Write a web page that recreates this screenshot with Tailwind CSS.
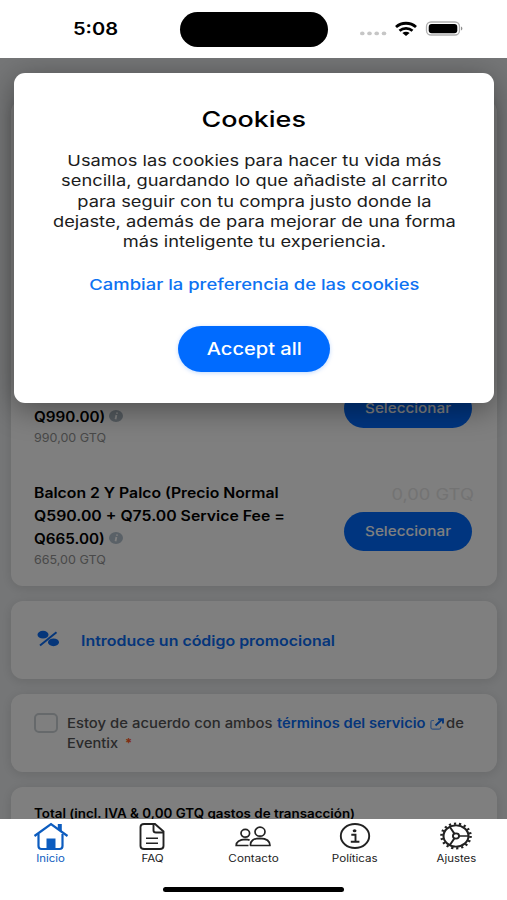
<!DOCTYPE html>
<html lang="es">
<head>
    <meta charset="UTF-8">
    <meta name="viewport" content="width=device-width, initial-scale=1.0">
    <title>Eventix</title>
    <script src="https://cdn.jsdelivr.net/npm/@tailwindcss/browser@4"></script>
</head>
<body class="bg-white font-['Inter','Liberation_Sans',sans-serif] text-black">
    <div class="flex flex-col w-[507px] h-[900px] overflow-hidden whitespace-nowrap">

        <!-- Status bar -->
        <header class="flex items-center h-[58px] shrink-0">
            <div class="w-[180px] pt-[2px] pl-[73px] text-[17px] font-semibold"><span class="inline-block origin-left scale-x-[1.18]">5:08</span></div>
            <div class="w-[148px] h-[35px] rounded-full bg-black"></div>
            <svg class="ml-[30px] w-[106px] h-[18px]" viewBox="358 20 106 18" fill="none">
                <g fill="#c6c6c6">
                    <ellipse cx="362.3" cy="33.4" rx="2.3" ry="1.9"/>
                    <ellipse cx="369.5" cy="33.4" rx="2.3" ry="1.9"/>
                    <ellipse cx="376.7" cy="33.4" rx="2.3" ry="1.9"/>
                    <ellipse cx="384" cy="33.4" rx="2.3" ry="1.9"/>
                </g>
                <g stroke="#000" stroke-width="2.8">
                    <path d="M396 27c5.600-5 14.400-5 20 0"/>
                    <path d="M399.500 30.700c3.700-3.100 9.300-3.100 13 0"/>
                </g>
                <path d="M402.400 33c2-1.700 5.200-1.700 7.200 0L406 35.900z" fill="#000"/>
                <rect x="426.500" y="22" width="33" height="13" rx="4.500" stroke="#b0b0b0" stroke-width="1.300"/>
                <rect x="428.700" y="24" width="28.600" height="9.200" rx="3" fill="#000"/>
                <path d="M461 26.600c1.900.6 1.900 3.400 0 4z" fill="#909090"/>
            </svg>
        </header>

        <main class="relative flex-1 overflow-hidden bg-[#ebedef]">
            <div class="flex flex-col gap-[15px] pl-[11px] pr-[10px] pt-[42px]">

                <!-- Tickets -->
                <section class="flex flex-col justify-end gap-[33px] h-[486px] pl-[23px] pr-[25px] pb-[16px] rounded-[12px] bg-white shadow-[0_2px_12px_rgba(0,0,0,0.12)]">
                    <div class="flex justify-between h-[89px]">
                        <div class="flex flex-col justify-end">
                            <div class="flex items-center gap-[3px] h-[23px]">
                                <span class="w-[72px] text-[14px] font-semibold"><span class="inline-block origin-left scale-x-[1.09]">Q990.00)</span></span>
                                <svg class="w-[14px] h-[12px] -mt-[1px]" viewBox="0 0 14 12">
                                    <ellipse cx="7" cy="6" rx="7" ry="6" fill="#a8b4be"/>
                                    <path d="M8 2.400v1.400M7.400 5L6.500 9.300" stroke="#fff" stroke-width="1.800"/>
                                </svg>
                            </div>
                            <div class="h-[20px] leading-[20px] text-[11.5px] text-[#929292]"><span class="inline-block origin-left scale-x-[1.09]">990,00 GTQ</span></div>
                        </div>
                        <div class="flex flex-col pt-[31px]">
                            <button class="w-[128px] h-[39px] -mt-[1px] rounded-full bg-[#006bff] text-white text-[13.5px] font-medium"><span class="inline-block scale-x-[1.13]">Seleccionar</span></button>
                        </div>
                    </div>
                    <div class="flex justify-between h-[89px]">
                        <div>
                            <div class="text-[14px] leading-[23px] font-semibold">
                                <div><span class="inline-block origin-left scale-x-[1.127]">Balcon 2 Y Palco (Precio Normal</span></div>
                                <div><span class="inline-block origin-left scale-x-[1.13]">Q590.00 + Q75.00 Service Fee =</span></div>
                                <div class="flex items-center gap-[3px]">
                                    <span class="w-[72px]"><span class="inline-block origin-left scale-x-[1.09]">Q665.00)</span></span>
                                    <svg class="w-[14px] h-[12px] -mt-[1px]" viewBox="0 0 14 12">
                                        <ellipse cx="7" cy="6" rx="7" ry="6" fill="#b4c2ce"/>
                                        <path d="M8 2.400v1.400M7.400 5L6.500 9.300" stroke="#fff" stroke-width="1.800"/>
                                    </svg>
                                </div>
                            </div>
                            <div class="h-[20px] leading-[21px] text-[11.5px] text-[#929292]"><span class="inline-block origin-left scale-x-[1.09]">665,00 GTQ</span></div>
                        </div>
                        <div class="flex flex-col items-end">
                            <div class="h-[31px] -mr-[2px] leading-[27px] text-[15.5px] text-[#e6e6e6]"><span class="inline-block origin-right scale-x-[1.18]">0,00 GTQ</span></div>
                            <button class="w-[128px] h-[39px] rounded-full bg-[#006bff] text-white text-[13.5px] font-medium"><span class="inline-block scale-x-[1.13]">Seleccionar</span></button>
                        </div>
                    </div>
                </section>

                <!-- Promo code -->
                <section class="flex items-center gap-[21px] h-[78px] px-[26px] rounded-[12px] bg-white shadow-[0_2px_12px_rgba(0,0,0,0.12)] text-[#0a6cf5]">
                    <svg class="w-[23px] h-[17px] -mt-[3px]" viewBox="0 0 23 17">
                        <ellipse cx="6" cy="4.700" rx="5.500" ry="3.900" fill="currentColor"/>
                        <ellipse cx="16.500" cy="12.300" rx="5.500" ry="3.900" fill="currentColor"/>
                        <path d="M3 15.500L19.500 2.200" stroke="currentColor" stroke-width="2"/>
                    </svg>
                    <span class="text-[14px] font-semibold"><span class="inline-block origin-left scale-x-[1.138]">Introduce un código promocional</span></span>
                </section>

                <!-- Terms -->
                <section class="flex gap-[9px] h-[78px] px-[23px] pt-[19px] rounded-[12px] bg-white shadow-[0_2px_12px_rgba(0,0,0,0.12)]">
                    <span class="w-[24px] h-[20px] rounded-[5px] border-2 border-[#ccd2d6]"></span>
                    <div class="pt-[1px] text-[13px] leading-[19.5px] font-medium text-[#545456]">
                        <div class="flex items-center">
                            <span class="w-[210px]"><span class="inline-block origin-left scale-x-[1.143]">Estoy de acuerdo con ambos</span></span>
                            <span class="w-[154px] font-semibold text-[#0a6cf5]"><span class="inline-block origin-left scale-x-[1.13]">términos del servicio</span></span>
                            <svg class="w-[14px] h-[12px] mt-px -ml-px" viewBox="0 0 14 12" fill="none" stroke="#0a6cf5">
                                <path d="M4 2.500H2.500Q.9 2.500.9 4v5.600q0 1.500 1.600 1.500h6.600q1.600 0 1.600-1.500V8.500" stroke-width="1.200" opacity=".65"/>
                                <path d="M5.500 7.500L12 1.500M8 1.200h5v4.300" stroke-width="1.900"/>
                            </svg>
                            <span class="ml-[2px]"><span class="inline-block origin-left scale-x-[1.14]">de</span></span>
                        </div>
                        <div class="flex">
                            <span class="w-[58px]"><span class="inline-block origin-left scale-x-[1.122]">Eventix</span></span>
                            <span class="text-[#ff5a1f] font-bold">*</span>
                        </div>
                    </div>
                </section>

                <!-- Total -->
                <section class="h-[120px] px-[23px] pt-[18px] rounded-[12px] bg-white shadow-[0_2px_12px_rgba(0,0,0,0.12)] text-[12.5px] font-semibold">
                    <span class="inline-block origin-left scale-x-[1.07]">Total (incl. IVA &amp; 0,00 GTQ gastos de transacción)</span>
                </section>
            </div>

            <!-- Cookie dialog -->
            <div class="absolute inset-0 bg-black/50 pt-[15px] pl-[14px]">
                <div class="flex flex-col items-center w-[480px] h-[330px] pt-[32px] rounded-[11px] bg-white shadow-[0_6px_30px_rgba(0,0,0,0.4)]">
                    <h1 class="text-[22px] leading-[28px] font-medium scale-x-[1.225]">Cookies</h1>
                    <p class="mt-[18px] text-[15px] leading-[20.3px] text-center text-[#1c1c1c] scale-x-[1.218]">
                        Usamos las cookies para hacer tu vida más<br>
                        sencilla, guardando lo que añadiste al carrito<br>
                        para seguir con tu compra justo donde la<br>
                        dejaste, además de para mejorar de una forma<br>
                        más inteligente tu experiencia.
                    </p>
                    <a class="mt-[23px] text-[15px] leading-[20px] font-medium text-[#0d72f2] scale-x-[1.228]">Cambiar la preferencia de las cookies</a>
                    <button class="mt-[31px] w-[152px] h-[46px] rounded-full bg-[#006bff] text-white text-[17px] font-medium shadow-[0_1px_4px_rgba(0,107,255,0.25)]"><span class="inline-block scale-x-[1.18]">Accept all</span></button>
                </div>
            </div>
        </main>

        <!-- Tab bar -->
        <nav class="shrink-0 h-[81px] bg-white">
            <div class="grid grid-cols-5 pt-[2px] text-[10px] leading-[14px] text-[#222]">
                <div class="flex flex-col items-center text-[#0c5cbf]">
                    <svg class="w-[36px] h-[30px]" viewBox="0 0 36 30" fill="none" stroke="currentColor" stroke-width="2.200">
                        <path d="M1.500 15L18 3l16.500 12"/>
                        <path d="M24.800 7.500V3h4v8.500z" fill="currentColor" stroke="none"/>
                        <path d="M5.500 13v12q0 3 3 3h18q3 0 3-3V13"/>
                        <path d="M13.500 28V17.500h9V28z" fill="currentColor" stroke="none"/>
                    </svg>
                    <span class="scale-x-[1.14]">Inicio</span>
                </div>
                <div class="flex flex-col items-center">
                    <svg class="w-[26px] h-[30px]" viewBox="0 0 26 30" fill="none" stroke="currentColor" stroke-width="1.900">
                        <path d="M5 3h11l8.500 7.500V25q0 3-3.500 3H5q-3.500 0-3.500-3V6Q1.500 3 5 3z"/>
                        <path d="M14.500 3v6.500q0 2 2.500 2h7.500"/>
                        <path d="M7 17.300h12M7 22.300h12" stroke-width="1.500"/>
                    </svg>
                    <span class="ml-px scale-x-[1.16]">FAQ</span>
                </div>
                <div class="flex flex-col items-center">
                    <svg class="w-[36px] h-[30px]" viewBox="0 0 36 30" fill="none" stroke="currentColor" stroke-width="1.700">
                        <ellipse cx="10.300" cy="12.300" rx="4.300" ry="3.900"/>
                        <path d="M13.500 24.500H1.200q.4-5.800 9-6.100 2.600 0 4.400 .700"/>
                        <ellipse cx="25" cy="10.700" rx="5" ry="4.500"/>
                        <path d="M15.500 24.500q-.600-7 9.500-7.200 10 .2 10 7.200z" stroke-linejoin="round"/>
                    </svg>
                    <span class="scale-x-[1.17]">Contacto</span>
                </div>
                <div class="flex flex-col items-center">
                    <svg class="w-[32px] h-[30px]" viewBox="0 0 32 30" fill="none" stroke="currentColor" stroke-width="1.900">
                        <ellipse cx="16" cy="15" rx="14.200" ry="12"/>
                        <ellipse cx="15.600" cy="9.700" rx="1.900" ry="1.500" fill="currentColor" stroke="none"/>
                        <path d="M12.300 13.700h4.200v7M11.800 20.700h8.600"/>
                    </svg>
                    <span class="scale-x-[1.16]">Políticas</span>
                </div>
                <div class="flex flex-col items-center">
                    <svg class="w-[34px] h-[30px]" viewBox="0 0 34 30" fill="none" stroke="currentColor">
                        <g transform="translate(17 15) scale(1.180 1)">
                            <circle r="10.600" stroke-width="1.800"/>
                            <circle r="12.300" stroke-width="2.200" stroke-dasharray="1.900 2.394"/>
                            <circle r="2.600" stroke-width="1.600"/>
                            <path d="M2.600 0H10.800M-1.300 2.250L-5.400 9.350M-1.300-2.250L-5.400-9.350" stroke-width="1.700"/>
                        </g>
                    </svg>
                    <span class="scale-x-[1.14]">Ajustes</span>
                </div>
            </div>
            <div class="mt-[22px] ml-[163px] w-[181px] h-[5px] rounded-full bg-black"></div>
        </nav>
    </div>
</body>
</html>
